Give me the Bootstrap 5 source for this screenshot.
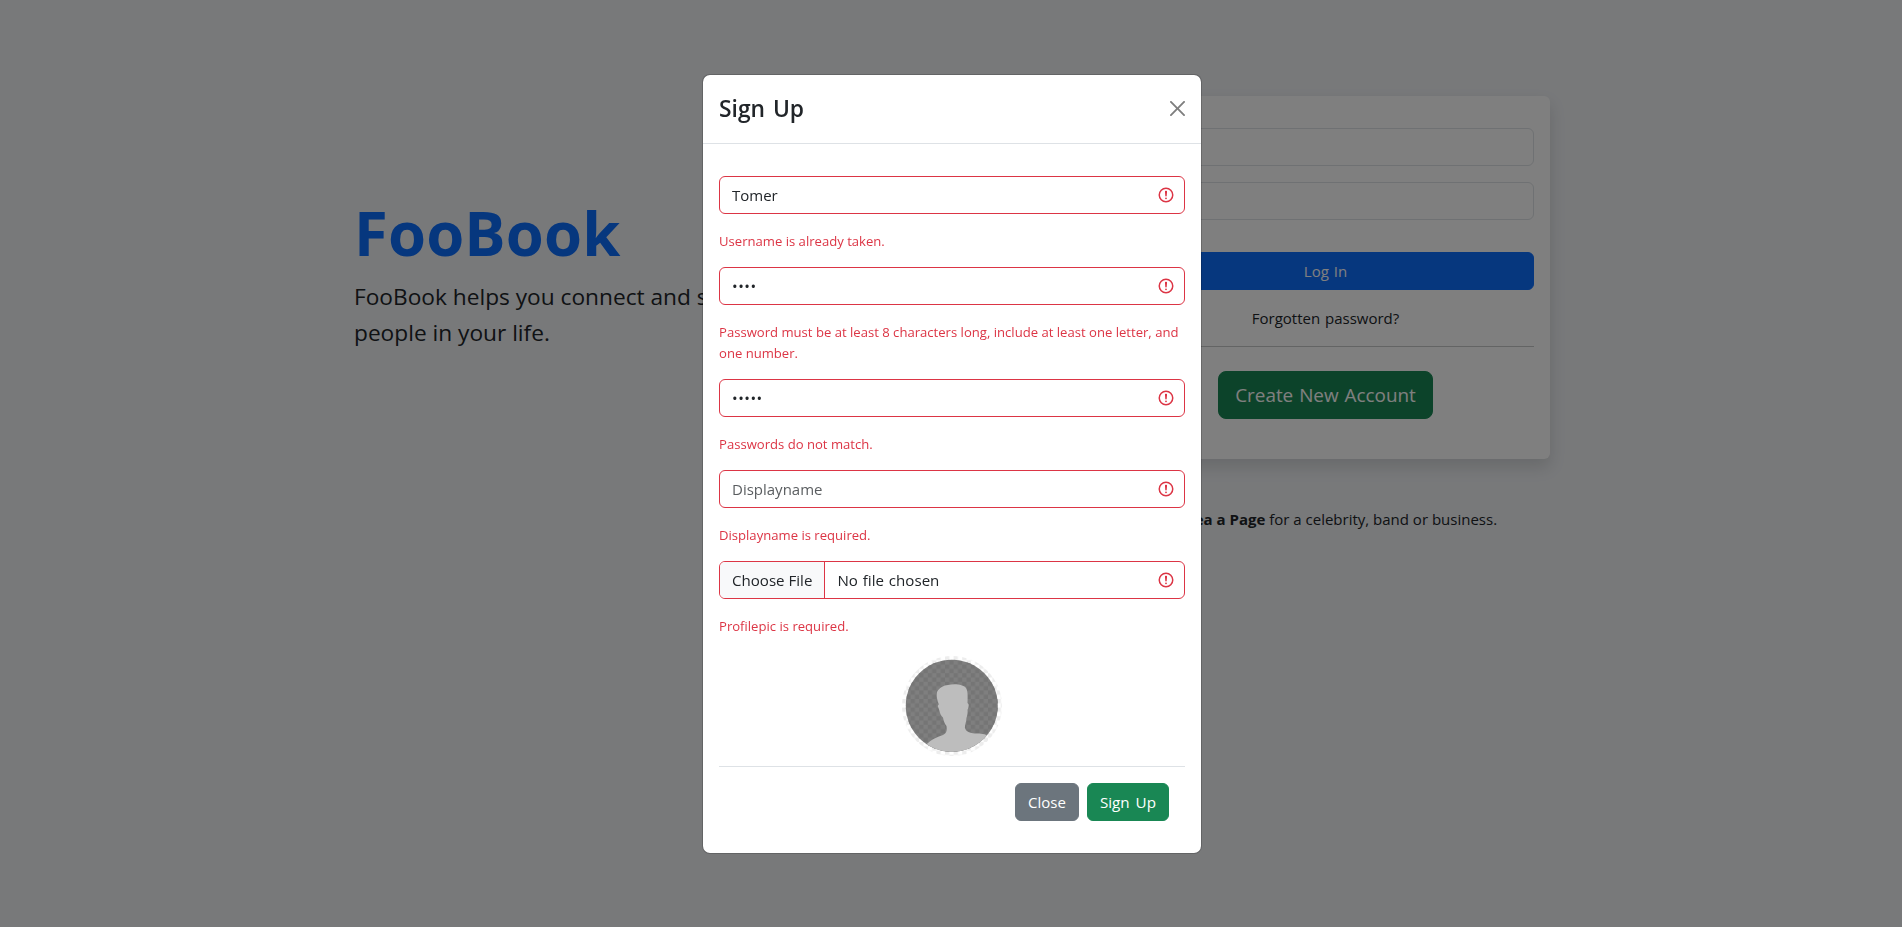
<!DOCTYPE html>
<html lang="en">
<head>
<meta charset="utf-8">
<title>FooBook</title>
<meta name="viewport" content="width=device-width, initial-scale=1">
<link href="https://cdn.jsdelivr.net/npm/bootstrap@5.3.0/dist/css/bootstrap.min.css" rel="stylesheet">
<style>
  body { background: #f0f2f5; font-family: "Open Sans", "Noto Sans", sans-serif; font-size: 15px; line-height: 24px; overflow: hidden; }
  .page { width: 1196px; margin-left: 354px; padding-top: 96px; }
  .intro { width: 500px; padding-top: 98px; }
  .brand { font-size: 61.5px; line-height: 77px; letter-spacing: .15px; }
  .tagline { font-size: 22.7px; line-height: 36px; margin-top: 8px; }
  .login { width: 449px; }
  .login-card { height: 363px; border-radius: 6px; word-spacing: 1px; }
  .login-btn { margin-top: 32px; }
  .form-control, .btn { font-size: 15px; line-height: 24px; word-spacing: 1px; }
  .form-control[type="file"] { font-size: 15.1px; }
  .form-control[type="password"] { letter-spacing: .5px; }
  .login-card .btn-lg { font-size: 18.9px; line-height: 30px; }
  .login-card hr { margin: 16px 0 24px; }
  .form-control.is-invalid { background-position: right 9px center; background-size: 18px 18px; }
  .modal { padding-left: 2px; }
  .modal-title { font-size: 22.8px; line-height: 36px; font-weight: 600; word-spacing: 2px; }
  .error-text { font-size: 13.1px; line-height: 21px; margin: 0; padding: 17px 0 15px; }
  .modal-footer { padding: 16px; }
  .modal-footer .btn-success { font-size: 15.2px; word-spacing: 2px; }
  .avatar { display: block; width: 100px; height: 100px; margin: 4px auto 10px; }
</style>
</head>
<body>
<main class="page d-flex justify-content-between">
  <section class="intro">
    <h1 class="brand text-primary fw-bold mb-0">FooBook</h1>
    <p class="tagline mb-0">FooBook helps you connect and share with the people in your life.</p>
  </section>
  <section class="login">
    <div class="login-card bg-white shadow px-3 pt-3 text-center">
      <input class="form-control mt-3 mb-3" type="text" aria-label="Username">
      <input class="form-control" type="password" aria-label="Password">
      <button class="btn btn-primary w-100 login-btn">Log In</button>
      <div class="mt-3">Forgotten password?</div>
      <hr>
      <button class="btn btn-success btn-lg">Create New Account</button>
    </div>
    <p class="text-center text-nowrap mt-5"><b>Createa a Page</b> for a celebrity, band or business.</p>
  </section>
</main>

<div class="modal d-block" tabindex="-1">
  <div class="modal-dialog modal-dialog-centered">
    <div class="modal-content">
      <div class="modal-header">
        <h1 class="modal-title">Sign Up</h1>
        <button type="button" class="btn-close" aria-label="Close"></button>
      </div>
      <form class="modal-body">
        <input class="form-control is-invalid mt-3" type="text" value="Tomer">
        <p class="error-text text-danger">Username is already taken.</p>
        <input class="form-control is-invalid" type="password" value="1234">
        <p class="error-text text-danger">Password must be at least 8 characters long, include at least one letter, and one number.</p>
        <input class="form-control is-invalid" type="password" value="12345">
        <p class="error-text text-danger">Passwords do not match.</p>
        <input class="form-control is-invalid" type="text" placeholder="Displayname">
        <p class="error-text text-danger">Displayname is required.</p>
        <input class="form-control is-invalid" type="file">
        <p class="error-text text-danger">Profilepic is required.</p>
        <svg class="avatar" viewBox="0 0 100 100">
          <defs>
            <pattern id="rim" width="8.6" height="8.6" patternUnits="userSpaceOnUse"><path fill="#ededed" d="M0 0h4.3v4.3H0zM4.3 4.3h4.3v4.3H4.3z"/></pattern>
            <pattern id="check" width="8.6" height="8.6" patternUnits="userSpaceOnUse"><path fill="#757575" d="M0 0h4.3v4.3H0zM4.3 4.3h4.3v4.3H4.3z"/></pattern>
            <clipPath id="disc"><circle cx="49.8" cy="49.7" r="46"/></clipPath>
          </defs>
          <circle cx="50" cy="50" r="50" fill="url(#rim)"/>
          <g clip-path="url(#disc)">
            <path fill="#7f7f7f" d="M0 0h100v100H0z"/>
            <path fill="url(#check)" d="M0 0h100v100H0z"/>
            <path fill="#bdbdbd" d="M24 89C29 83 36 81 41 79C45 77 45 74 44.500 70C42 67 41.500 64 41 61.500C38 59 38 56 36.300 51.500C35 49 37 49 36.700 48C34.500 43 34.500 38 35 36C37 32 42 29 46 29C52 27.500 61 28 64 32C66 35 65.700 40 65.500 47C67.500 48 66.700 51 65.500 54C66 58 65 60 64.500 62C64.500 66 62.500 69 63 72C64 76 68 77 73 77.500C80 77.500 83 78 86 80V100H24z"/>
          </g>
        </svg>
        <div class="modal-footer">
          <button type="button" class="btn btn-secondary m-0 me-2">Close</button>
          <button type="button" class="btn btn-success m-0">Sign Up</button>
        </div>
      </form>
    </div>
  </div>
</div>
<div class="modal-backdrop show"></div>
<script src="https://cdn.jsdelivr.net/npm/bootstrap@5.3.0/dist/js/bootstrap.bundle.min.js"></script>
</body>
</html>
